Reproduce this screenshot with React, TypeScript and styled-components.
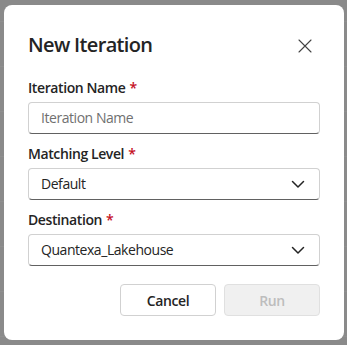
import React from "react";
import styled, { createGlobalStyle } from "styled-components";

const GlobalStyle = createGlobalStyle`
  html, body {
    margin: 0;
    padding: 0;
    width: 347px;
    height: 345px;
    overflow: hidden;
  }
  body {
    background-color: #8a8a8a;
    background-image: repeating-linear-gradient(
      to bottom,
      transparent 0px,
      transparent 21px,
      #8f8f8f 21px,
      #8f8f8f 22px,
      transparent 22px,
      transparent 65px,
      #6f6f6f 65px,
      #6f6f6f 66px,
      transparent 66px,
      transparent 67px
    );
    background-size: 100% 45px;
    font-family: "Open Sans", "Noto Sans", sans-serif;
    color: #242424;
  }
`;

const Backdrop = styled.div`
  width: 347px;
  height: 345px;
  padding: 5px 3px 5px 4px;
  box-sizing: border-box;
`;

const Surface = styled.div`
  width: 340px;
  height: 335px;
  box-sizing: border-box;
  background: #ffffff;
  border-radius: 8px;
  padding: 24px;
  display: flex;
  flex-direction: column;
`;

const TitleBar = styled.div`
  display: flex;
  align-items: center;
  justify-content: space-between;
  height: 28px;
  padding-top: 2px;
`;

const Title = styled.h2`
  margin: 0;
  font-size: 20px;
  line-height: 28px;
  font-weight: 600;
  color: #242424;
  letter-spacing: -0.65px;
`;

const CloseButton = styled.button`
  width: 32px;
  height: 32px;
  margin-right: -1px;
  margin-top: 2px;
  border: none;
  background: transparent;
  display: flex;
  align-items: center;
  justify-content: center;
  padding: 0;
  color: #424242;
`;

const Form = styled.div`
  display: flex;
  flex-direction: column;
  gap: 10px;
  margin-top: 19px;
`;

const Field = styled.div`
  display: flex;
  flex-direction: column;
  gap: 4px;
`;

const Label = styled.label`
  font-size: 14px;
  line-height: 20px;
  font-weight: 600;
  color: #242424;
  letter-spacing: -0.4px;
`;

const Req = styled.span`
  color: #c50f1f;
  margin-left: 4px;
`;

const Control = styled.div`
  height: 32px;
  box-sizing: border-box;
  border: 1px solid #d1d1d1;
  border-bottom-color: #616161;
  border-radius: 4px;
  display: flex;
  align-items: center;
  padding: 0 13px 0 12px;
  font-size: 14px;
  line-height: 20px;
  letter-spacing: -0.45px;
`;

const ControlText = styled.span<{ $placeholder?: boolean }>`
  flex: 1;
  color: ${(p) => (p.$placeholder ? "#707070" : "#242424")};
`;

const Actions = styled.div`
  display: flex;
  justify-content: flex-end;
  gap: 8px;
  margin-top: 18px;
`;

const Button = styled.button<{ $disabled?: boolean }>`
  width: 96px;
  height: 32px;
  box-sizing: border-box;
  border-radius: 4px;
  border: 1px solid ${(p) => (p.$disabled ? "#e0e0e0" : "#d1d1d1")};
  background: ${(p) => (p.$disabled ? "#f0f0f0" : "#ffffff")};
  color: ${(p) => (p.$disabled ? "#bdbdbd" : "#242424")};
  font-family: "Open Sans", "Noto Sans", sans-serif;
  font-size: 14px;
  font-weight: 600;
  letter-spacing: -0.4px;
  padding: 0;
`;

const Chevron = () => (
  <svg width="16" height="16" viewBox="0 0 16 16" fill="none">
    <path d="M2.5 5.5l5.5 5.5 5.5-5.5" stroke="#242424" strokeWidth="1.5" strokeLinecap="round" strokeLinejoin="round" />
  </svg>
);

const Dismiss = () => (
  <svg width="14" height="14" viewBox="0 0 14 14" fill="none">
    <path d="M1 1l12 12M13 1L1 13" stroke="#424242" strokeWidth="1.1" strokeLinecap="round" />
  </svg>
);

export default function App() {
  return (
    <>
      <GlobalStyle />
      <Backdrop>
        <Surface>
          <TitleBar>
            <Title>New Iteration</Title>
            <CloseButton aria-label="close">
              <Dismiss />
            </CloseButton>
          </TitleBar>
          <Form>
            <Field>
              <Label>
                Iteration Name<Req>*</Req>
              </Label>
              <Control>
                <ControlText $placeholder>Iteration Name</ControlText>
              </Control>
            </Field>
            <Field>
              <Label>
                Matching Level<Req>*</Req>
              </Label>
              <Control>
                <ControlText>Default</ControlText>
                <Chevron />
              </Control>
            </Field>
            <Field>
              <Label>
                Destination<Req>*</Req>
              </Label>
              <Control>
                <ControlText>Quantexa_Lakehouse</ControlText>
                <Chevron />
              </Control>
            </Field>
          </Form>
          <Actions>
            <Button>Cancel</Button>
            <Button $disabled>Run</Button>
          </Actions>
        </Surface>
      </Backdrop>
    </>
  );
}
